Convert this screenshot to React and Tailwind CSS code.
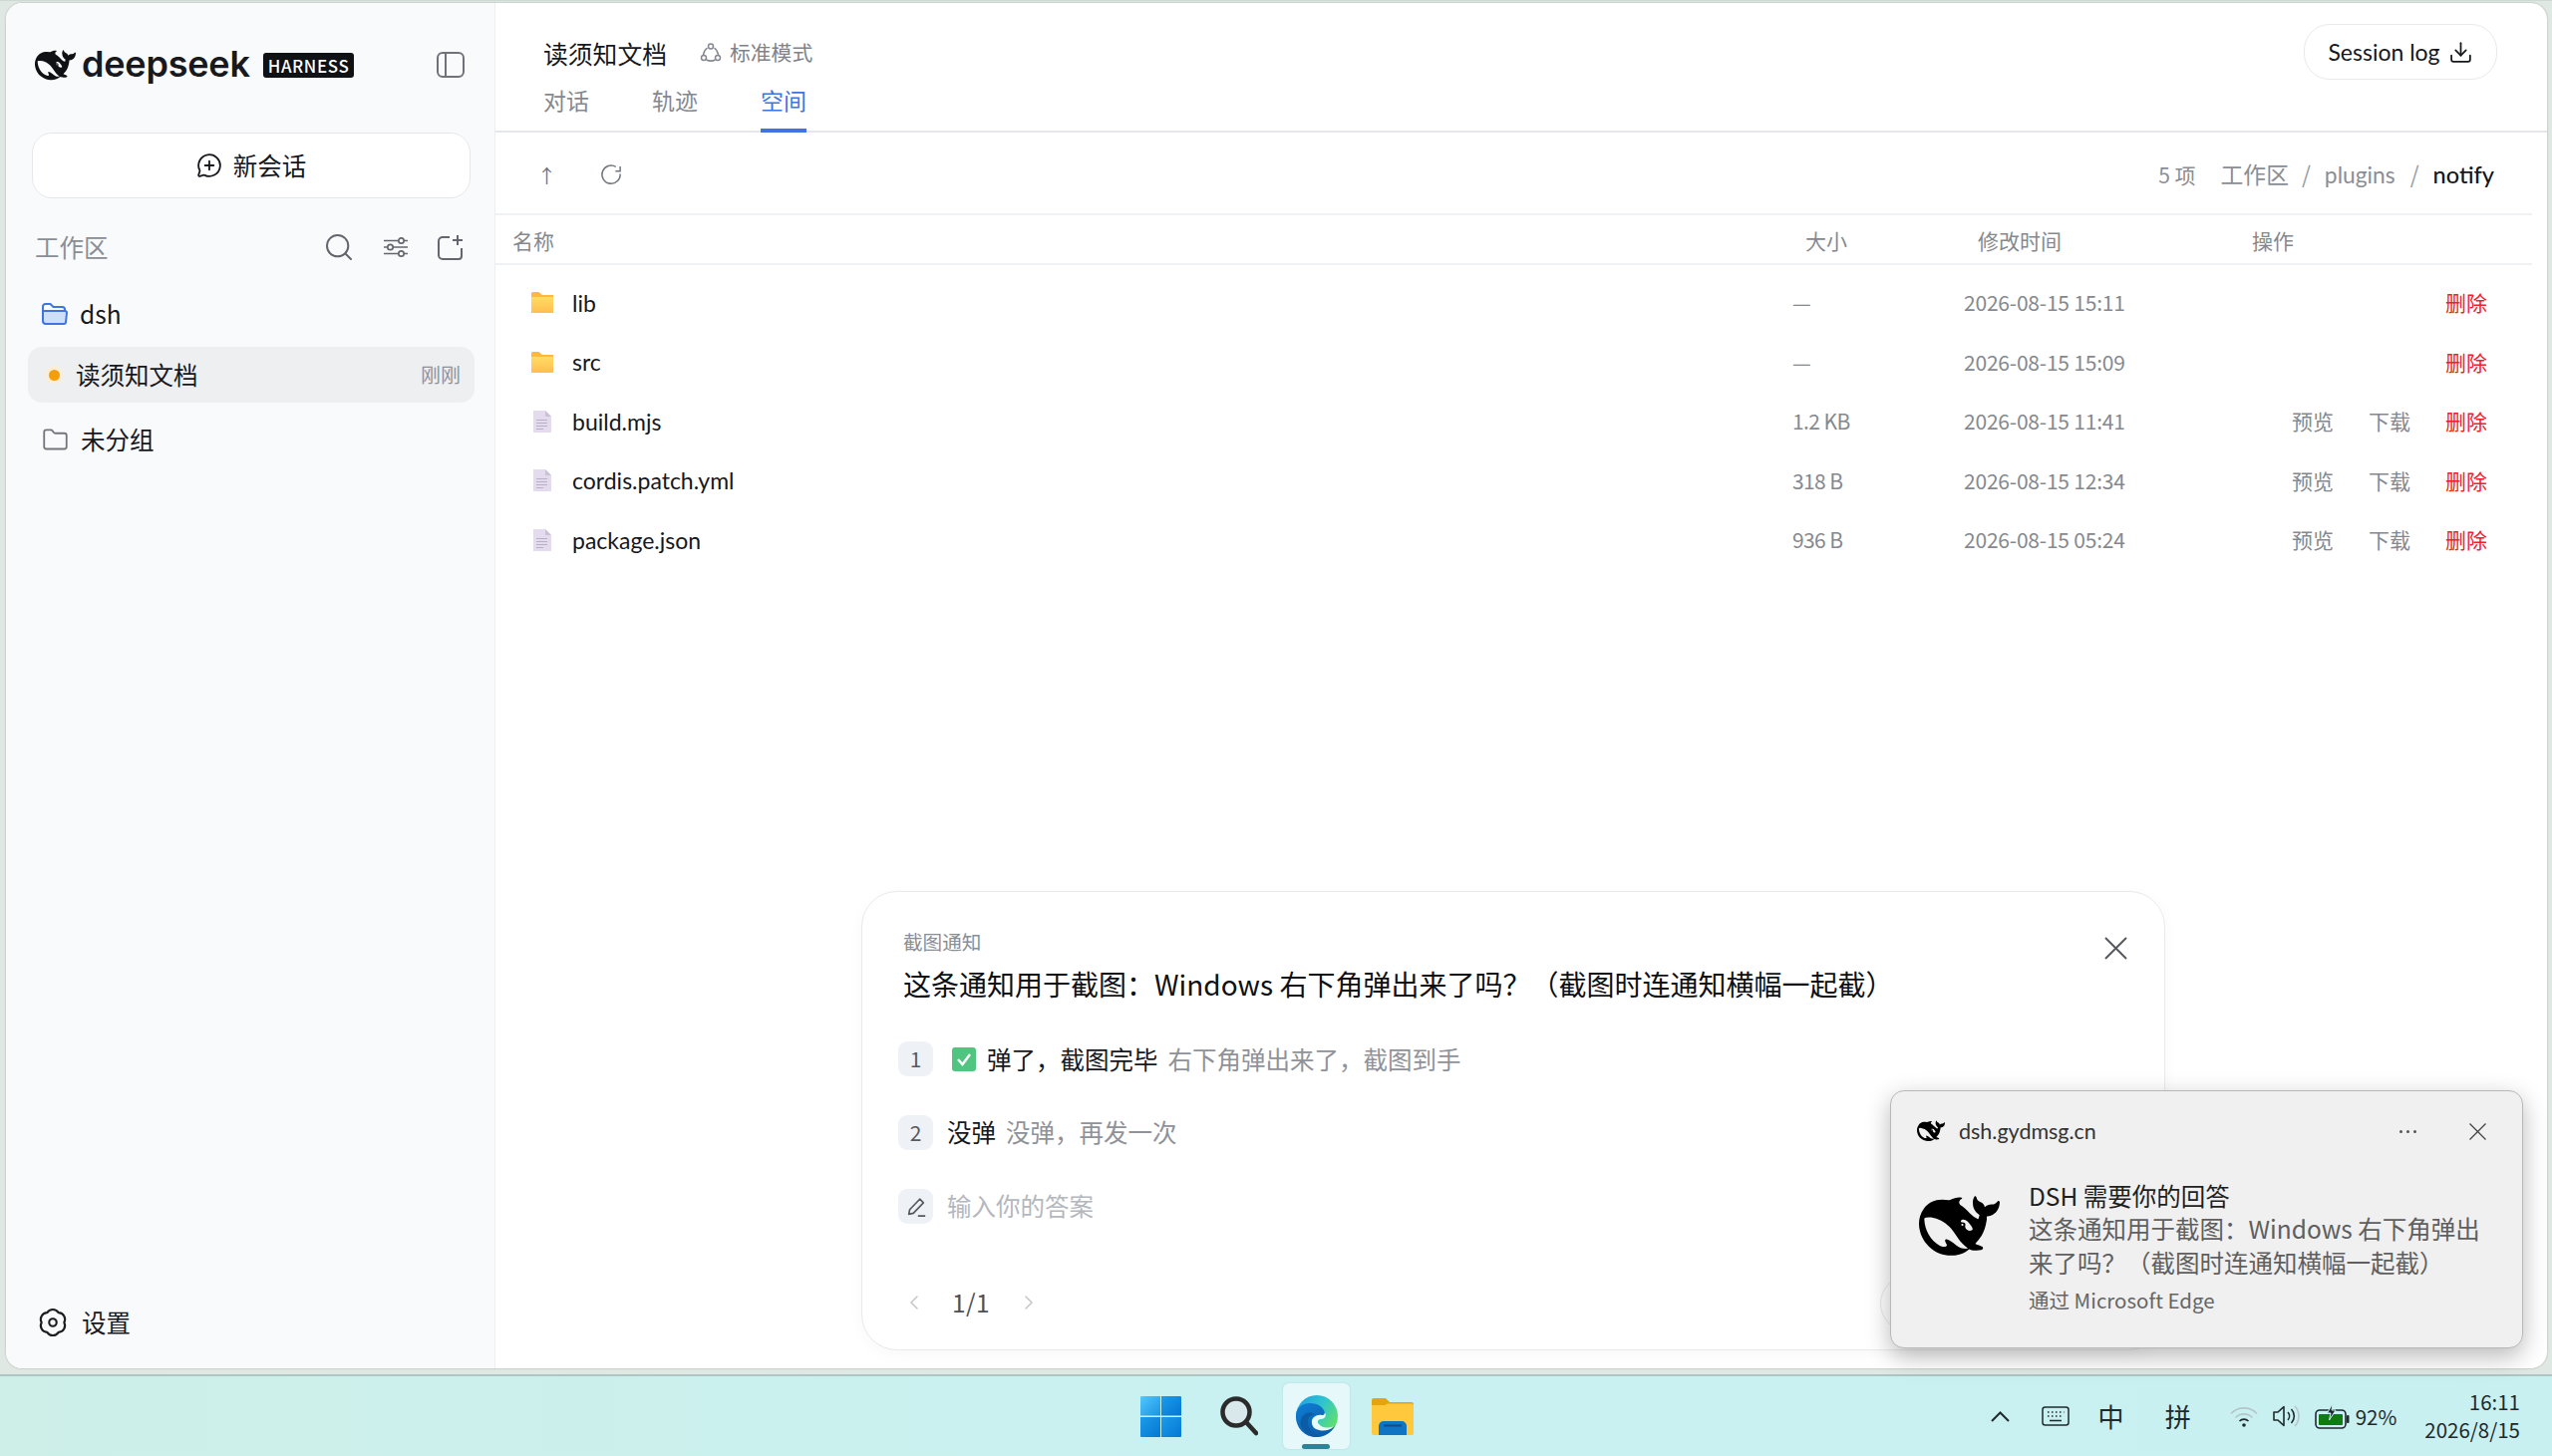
import { Search, MessageCirclePlus, Download, ChevronLeft, ChevronRight, Folder } from 'lucide-react';

const WHALE =
  'M23.748 4.482c-.254-.124-.364.113-.512.234-.051.039-.094.09-.137.136-.372.397-.806.657-1.373.626-.829-.046-1.537.214-2.163.848-.133-.782-.575-1.248-1.247-1.548-.352-.156-.708-.311-.955-.65-.172-.241-.219-.51-.305-.774-.055-.16-.11-.323-.293-.35-.2-.031-.278.136-.356.276-.313.572-.434 1.202-.422 1.84.027 1.436.633 2.58 1.838 3.393.137.093.172.187.129.323-.082.28-.18.552-.266.833-.055.179-.137.217-.329.14a5.526 5.526 0 01-1.736-1.18c-.857-.828-1.631-1.742-2.597-2.458a11.365 11.365 0 00-.689-.471c-.985-.957.13-1.743.388-1.836.27-.098.093-.432-.779-.428-.872.004-1.67.295-2.687.684a3.055 3.055 0 01-.465.137 9.597 9.597 0 00-2.883-.102c-1.885.21-3.39 1.102-4.497 2.623C.082 8.606-.231 10.684.152 12.85c.403 2.284 1.569 4.175 3.36 5.653 1.858 1.533 3.997 2.284 6.438 2.14 1.482-.085 3.133-.284 4.994-1.86.47.234.962.327 1.78.397.63.059 1.236-.03 1.705-.128.735-.156.684-.837.419-.961-2.155-1.004-1.682-.595-2.113-.926 1.096-1.296 2.746-2.642 3.392-7.003.05-.347.007-.565 0-.845-.004-.17.035-.237.23-.256a4.173 4.173 0 001.545-.475c1.396-.763 1.96-2.015 2.093-3.517.02-.23-.004-.467-.247-.588zM11.581 18c-2.089-1.642-3.102-2.183-3.52-2.16-.392.024-.321.471-.235.763.09.288.207.486.371.739.114.167.192.416-.113.603-.673.416-1.842-.14-1.897-.167-1.361-.802-2.5-1.86-3.301-3.307-.774-1.393-1.224-2.887-1.298-4.482-.02-.386.093-.522.477-.592a4.696 4.696 0 011.529-.039c2.132.312 3.946 1.265 5.468 2.774.868.86 1.525 1.887 2.202 2.891.72 1.066 1.494 2.082 2.48 2.914.348.292.625.514.891.677-.802.09-2.14.11-3.054-.614zm1-6.44a.306.306 0 01.415-.287.302.302 0 01.2.288.306.306 0 01-.31.307.303.303 0 01-.304-.308zm3.11 1.596c-.2.081-.399.151-.59.16a1.245 1.245 0 01-.798-.254c-.274-.23-.47-.358-.552-.758a1.73 1.73 0 01.016-.588c.07-.327-.008-.537-.239-.727-.187-.156-.426-.199-.688-.199a.559.559 0 01-.254-.078c-.11-.054-.2-.19-.114-.358.028-.054.16-.186.192-.21.356-.202.767-.136 1.146.016.352.144.618.408 1.001.782.391.451.462.576.685.914.176.265.336.537.445.848.067.195-.019.354-.25.452z';

const FILES = [
  { name: 'lib', dir: true, size: '—', time: '2026-08-15 15:11' },
  { name: 'src', dir: true, size: '—', time: '2026-08-15 15:09' },
  { name: 'build.mjs', size: '1.2 KB', time: '2026-08-15 11:41' },
  { name: 'cordis.patch.yml', size: '318 B', time: '2026-08-15 12:34' },
  { name: 'package.json', size: '936 B', time: '2026-08-15 05:24' },
];

const LATIN = "font-['Lato','Noto_Sans_CJK_SC',sans-serif]";

const Whale = ({ className }) => (
  <svg viewBox="0 0 24 24" className={className} fill="currentColor" fillRule="evenodd">
    <path d={WHALE} />
  </svg>
);

const FolderIcon = () => (
  <svg viewBox="0 0 22 21" className="w-[22px] h-[21px]">
    <defs>
      <linearGradient id="folderBody" x1="0" y1="0" x2="0" y2="1">
        <stop offset="0" stopColor="#ffdc62" />
        <stop offset="1" stopColor="#ffbd51" />
      </linearGradient>
    </defs>
    <path d="M0 1.500A1.500 1.500 0 0 1 1.500 0h6L11 3h11v18H0z" fill="#fdb93f" />
    <rect y="5" width="22" height="16" fill="url(#folderBody)" />
  </svg>
);

const FileIcon = () => (
  <svg viewBox="0 0 18 22" className="w-[18px] h-[22px]">
    <path d="M0 0h12l6 6v16H0z" fill="#e4dcee" />
    <path d="M12 0l6 6h-6z" fill="#c9c2d4" />
    <path d="M3 9.500h11M3 12.500h11M3 15.500h11M3 18.500h7" stroke="#b8b0c4" strokeWidth="1" />
  </svg>
);

const Edge = () => (
  <svg viewBox="0 0 42 42" className="w-[42px] h-[42px]">
    <defs>
      <linearGradient id="edgeTop" x1="0" y1="0" x2="1" y2="0.6">
        <stop offset="0" stopColor="#1b9de2" />
        <stop offset="0.55" stopColor="#2fc4cf" />
        <stop offset="1" stopColor="#5fe06a" />
      </linearGradient>
      <linearGradient id="edgeLow" x1="0" y1="0" x2="0.7" y2="1">
        <stop offset="0" stopColor="#0f7fd6" />
        <stop offset="1" stopColor="#0b5aa8" />
      </linearGradient>
    </defs>
    <circle cx="21" cy="21" r="21" fill="url(#edgeTop)" />
    <path d="M0 21C0 12 7 8 14 8c8 0 14 4 15 10 .3 2-1 3-3 3h-4c-4 0-7 3-6 7 1 4 6 7 12 7 5 0 10-2 12-6-3 7-10 13-20 13C9 42 0 33 0 21z" fill="url(#edgeLow)" />
    <path d="M19 19c-5 1-8 5-7 10 1 5 6 10 13 12-8 2-15-2-19-8-3-5-1-13 5-15 3-1 6 0 8 1z" fill="#0c5ba5" />
    <path d="M16 27c0-5 5-8 10-7 2 .5 3-1 2.600-2.500C31 19 30 24 25 24c-3 0-4 3-2 5 2 3 8 5 15 2-5 6-14 5-18 3-3-1.500-4-4-4-7z" fill="#e8f9fa" />
  </svg>
);

const WinLogo = () => (
  <svg viewBox="0 0 41 41" className="w-[41px] h-[41px]">
    <defs>
      <linearGradient id="winA" x1="0" y1="0" x2="1" y2="1">
        <stop offset="0" stopColor="#52c8fb" />
        <stop offset="1" stopColor="#1b93e5" />
      </linearGradient>
      <linearGradient id="winB" x1="0" y1="0" x2="1" y2="1">
        <stop offset="0" stopColor="#1d9be8" />
        <stop offset="1" stopColor="#0478d4" />
      </linearGradient>
    </defs>
    <path d="M1 0h19v19.500H0V1a1 1 0 0 1 1-1z" fill="url(#winA)" />
    <path d="M21 0h19a1 1 0 0 1 1 1v18.500H21z" fill="url(#winB)" />
    <path d="M0 21h20v20H1a1 1 0 0 1-1-1z" fill="url(#winB)" />
    <path d="M21 21h20v19a1 1 0 0 1-1 1H21z" fill="url(#winB)" />
  </svg>
);

const TaskSearch = () => (
  <svg viewBox="0 0 38 40" className="w-[38px] h-[40px]">
    <circle cx="16" cy="16" r="13.500" fill="#d9e8ea" stroke="#2b2b2b" strokeWidth="4.500" />
    <path d="M26 26l10 11" stroke="#2b2b2b" strokeWidth="4.500" strokeLinecap="round" />
  </svg>
);

const Explorer = () => (
  <svg viewBox="0 0 42 37" className="w-[42px] h-[37px]">
    <path d="M0 2a2 2 0 0 1 2-2h12l4 4h22a2 2 0 0 1 2 2v4H0z" fill="#e5a50a" />
    <path d="M0 7h13l3-1.500h24a2 2 0 0 1 2 2V35a2 2 0 0 1-2 2H2a2 2 0 0 1-2-2z" fill="#ffc83d" />
    <path d="M7 37V28a5 5 0 0 1 5-5h18a5 5 0 0 1 5 5v9z" fill="#0f74c4" />
    <rect x="12" y="26.500" width="18" height="2" fill="#0b4f8f" />
  </svg>
);

const Badge = ({ children }) => (
  <span className="w-[35px] h-[35px] rounded-[9px] bg-[#eef1f6] flex items-center justify-center text-[21px] text-[#555a63] shrink-0">
    {children}
  </span>
);

export default function App() {
  return (
    <div className="relative w-[2560px] h-[1461px] overflow-hidden bg-[#dfe8e2] font-['Noto_Sans_CJK_SC',sans-serif] text-[#16181d]">
      <div className="h-[1379px] pl-[6px] pr-[5px] pt-[2px] pb-[6px] border-t border-[#cdd9d2]">
        <div className="h-full flex rounded-[16px] overflow-hidden bg-white shadow-[0_0_2px_rgba(0,0,0,0.3)]">
          {/* sidebar */}
          <aside className="w-[491px] shrink-0 bg-[#f9fafc] border-r border-[#edeef0] flex flex-col">
            <div className="h-[130px] pl-[29px] pr-[30px] flex items-center pb-[6px]">
              <Whale className="w-[41px] h-[41px] text-[#0f1115]" />
              <span className="ml-[6px] font-['Inter',sans-serif] font-semibold text-[36px] tracking-[-0.200px] leading-none text-[#17191e] pb-[2px]">deepseek</span>
              <span className="ml-[13px] h-[25px] px-[5px] rounded-[3px] bg-[#0f1115] text-white text-[17px] font-medium tracking-[0.600px] leading-none flex items-center">HARNESS</span>
              <svg viewBox="0 0 28 26" className="ml-auto w-[28px] h-[26px]" fill="none" stroke="#6f7379" strokeWidth="2">
                <rect x="1" y="1" width="26" height="24" rx="5" />
                <path d="M9 1v24" />
              </svg>
            </div>
            <div className="ml-[26px] mr-[24px] h-[66px] rounded-[20px] border border-[#e6e7ea] bg-white flex items-center justify-center gap-[11px] text-[24.500px]">
              <MessageCirclePlus size={26} strokeWidth={1.700} />
              新会话
            </div>
            <div className="mt-[21px] pl-[29px] pr-[30px] h-[56px] flex items-center">
              <span className="text-[24.500px] text-[#8a8e95]">工作区</span>
              <Search className="ml-auto text-[#63676d]" size={32} strokeWidth={1.500} />
              <svg viewBox="0 0 24 24" className="ml-[29px] w-[24px] h-[24px]" fill="none" stroke="#63676d" strokeWidth="1.700">
                <path d="M0 5.500h14M21 5.500h3M0 12h3M10 12h14M0 18.500h14M21 18.500h3" />
                <circle cx="17.500" cy="5.500" r="2.700" />
                <circle cx="6.500" cy="12" r="2.700" />
                <circle cx="17.500" cy="18.500" r="2.700" />
              </svg>
              <svg viewBox="0 0 28 26" className="ml-[29px] w-[28px] h-[26px]" fill="none" stroke="#63676d" strokeWidth="2">
                <path d="M13 3H6a4 4 0 0 0-4 4v14a4 4 0 0 0 4 4h16a3 3 0 0 0 3-3v-8M21 1v10M16 6h10" />
              </svg>
            </div>
            <div className="mt-[14px] pl-[36px] h-[50px] flex items-center gap-[12px] text-[24.500px]">
              <svg viewBox="0 0 26 22" className="w-[26px] h-[22px]" fill="#cfdffb" stroke="#3f74e3" strokeWidth="2" strokeLinejoin="round">
                <path d="M1 18V3.500A2.500 2.500 0 0 1 3.500 1h5l3 3h9A2.500 2.500 0 0 1 23 6.500V8" fill="none" />
                <path d="M1 8h22a2 2 0 0 1 2 2l-1 9a2 2 0 0 1-2 2H4a3 3 0 0 1-3-3z" />
              </svg>
              dsh
            </div>
            <div className="ml-[22px] mr-[20px] mt-[8px] h-[56px] rounded-[14px] bg-[#eeeff1] flex items-center pl-[17px] pr-[14px]">
              <span className="w-[18px] h-[18px] rounded-full bg-[#fbeed8] flex items-center justify-center">
                <span className="w-[11px] h-[11px] rounded-full bg-[#f59e0b]" />
              </span>
              <span className="ml-[13px] text-[24.500px]">读须知文档</span>
              <span className="ml-auto text-[20px] text-[#8f9298]">刚刚</span>
            </div>
            <div className="mt-[12px] pl-[36px] h-[50px] flex items-center gap-[12px] text-[24.500px]">
              <Folder className="text-[#72767c]" size={27} strokeWidth={1.600} />
              未分组
            </div>
            <div className="mt-auto mb-[26px] pl-[31px] h-[40px] flex items-center gap-[13px] text-[24.500px]">
              <svg viewBox="0 0 24 24" className="w-[32px] h-[32px]" fill="none" stroke="#1b1d21" strokeWidth="1.600" strokeLinejoin="round">
                <path d="M7.750 4.640A5 5 0 0 1 16.250 4.640A5 5 0 0 1 20.500 12A5 5 0 0 1 16.250 19.360A5 5 0 0 1 7.750 19.360A5 5 0 0 1 3.500 12A5 5 0 0 1 7.750 4.640Z" />
                <circle cx="12" cy="12" r="2.800" />
              </svg>
              设置
            </div>
          </aside>

          {/* main */}
          <main className="flex-1 min-w-0 flex flex-col">
            <header className="h-[130px] shrink-0 border-b-2 border-[#e5e7eb] flex justify-between pl-[48px] pr-[50px]">
              <div className="flex flex-col">
                <div className="pt-[33px] h-[67px] flex items-start">
                  <span className="text-[24.800px] leading-[34px]">读须知文档</span>
                  <span className="ml-[33px] flex items-center gap-[8px] h-[34px] text-[20.800px] text-[#7f8389]">
                    <svg viewBox="0 0 22 22" className="w-[22px] h-[22px]" fill="none" stroke="#85898f" strokeWidth="1.500">
                      <circle cx="11" cy="4.500" r="2.500" />
                      <circle cx="4" cy="16" r="2.500" />
                      <circle cx="18" cy="16" r="2.500" />
                      <path d="M7.500 6c-2 1.500-3.500 3.500-4 7M14.500 6c2 1.500 3.500 3.500 4 7M6.500 18c3 1.500 6 1.500 9 0" />
                    </svg>
                    标准模式
                  </span>
                </div>
                <nav className="flex gap-[63px] text-[23px] text-[#85898f]">
                  <span className="h-[63px] pt-[15px] leading-[30px]">对话</span>
                  <span className="h-[63px] pt-[15px] leading-[30px]">轨迹</span>
                  <span className="h-[63px] pt-[15px] leading-[30px] text-[#3f74e3] border-b-[4px] border-[#3f74e3]">空间</span>
                </nav>
              </div>
              <div className={`mt-[21px] h-[56px] w-[194px] rounded-[26px] border border-[#e8e9eb] flex items-center justify-center gap-[8px] text-[23px] ${LATIN}`}>
                Session log
                <Download size={25} strokeWidth={1.700} />
              </div>
            </header>

            <div className="flex-1 min-h-0 mr-[15px] flex flex-col">
              <div className="h-[83px] shrink-0 border-b-2 border-[#f0f1f2] flex items-center pt-[4px] pl-[42px] pr-[38px] text-[#8a8e95]">
                <span className="text-[19px] text-[#6f7379] leading-none">↑</span>
                <svg viewBox="0 0 24 24" className="ml-[44px] w-[23px] h-[23px]" fill="none" stroke="#74787e" strokeWidth="1.600">
                  <path d="M16.500 3.500A9.500 9.500 0 1 0 21 11" />
                  <path d="M21 3v5h-5" />
                </svg>
                <span className="ml-auto text-[21px]">5 项</span>
                <span className="ml-[25px] text-[22.800px]">工作区</span>
                <span className="ml-[13px] text-[22.800px] text-[#9a9da3]">/</span>
                <span className={`ml-[14px] text-[22.800px] ${LATIN}`}>plugins</span>
                <span className="ml-[15px] text-[22.800px] text-[#9a9da3]">/</span>
                <span className={`ml-[14px] text-[23.500px] font-medium text-[#16181d] ${LATIN}`}>notify</span>
              </div>
              <div className="h-[50px] shrink-0 border-b-2 border-[#f0f1f2] pt-[3px] pl-[17px] grid grid-cols-[1285px_171px_289px_1fr] items-center text-[21px] text-[#85898f]">
                <span>名称</span>
                <span className="pl-[12px]">大小</span>
                <span className="pl-[14px]">修改时间</span>
                <span>操作</span>
              </div>
              <div className="pt-[8px] flex-1 min-h-0">
                {FILES.map((file) => (
                  <div key={file.name} className="h-[59.500px] pl-[17px] grid grid-cols-[1285px_171px_289px_1fr] items-center text-[21px] text-[#85898f]">
                    <span className={`pl-[19px] flex items-center gap-[19px] text-[23px] text-[#16181d] ${LATIN}`}>
                      <span className="w-[22px] flex justify-center">{file.dir ? <FolderIcon /> : <FileIcon />}</span>
                      {file.name}
                    </span>
                    <span className="-ml-[1px] tracking-[-0.600px]">{file.size}</span>
                    <span className="tracking-[-0.200px]">{file.time}</span>
                    <span className="flex justify-end gap-[35px] pr-[45px]">
                      {!file.dir && <span>预览</span>}
                      {!file.dir && <span>下载</span>}
                      <span className="text-[#f0202a]">删除</span>
                    </span>
                  </div>
                ))}
              </div>
              <div className="flex justify-center pb-[18px] pr-[1px] shrink-0">
                <section className="relative w-[1308px] h-[461px] rounded-[36px] border border-[#e9eaec] bg-white pl-[41px] pt-[37px] shadow-[0_4px_16px_rgba(0,0,0,0.03)]">
                  <p className="text-[19.600px] leading-[26px] text-[#8a8e95]">截图通知</p>
                  <h2 className="mt-[10px] text-[28px] leading-[38px] text-[#0e1013]">这条通知用于截图：Windows 右下角弹出来了吗？（截图时连通知横幅一起截）</h2>
                  <svg viewBox="0 0 23 23" className="absolute right-[37px] top-[45px] w-[23px] h-[23px]" stroke="#55595f" strokeWidth="2">
                    <path d="M1 1l21 21M22 1L1 22" />
                  </svg>
                  <div className="mt-[39px] -ml-[5px] flex flex-col gap-[39px] text-[24.500px]">
                    <div className="flex items-center gap-[14px] h-[35px]">
                      <div className="flex items-center">
                        <Badge>1</Badge>
                        <svg viewBox="0 0 24 24" className="ml-[19px] w-[24px] h-[24px]">
                          <rect width="24" height="24" rx="3" fill="#4fc57f" />
                          <path d="M6 12l4.500 5L18 7" fill="none" stroke="#fff" strokeWidth="2.500" />
                        </svg>
                      </div>
                      <span className="-ml-[3px] pt-[2px]">弹了，截图完毕</span>
                      <span className="-ml-[4px] pt-[2px] text-[#8f9298]">右下角弹出来了，截图到手</span>
                    </div>
                    <div className="flex items-center gap-[14px] h-[35px]">
                      <Badge>2</Badge>
                      <span>没弹</span>
                      <span className="-ml-[4px] text-[#8f9298]">没弹，再发一次</span>
                    </div>
                    <div className="flex items-center gap-[14px] h-[35px]">
                      <Badge>
                        <svg viewBox="0 0 24 24" className="w-[22px] h-[22px]" fill="none" stroke="#55595f" strokeWidth="1.800" strokeLinejoin="round">
                          <path d="M4 20l1-5L16 3.500l4 4L9 19zM14 22h8" />
                        </svg>
                      </Badge>
                      <span className="text-[#b4b7bd]">输入你的答案</span>
                    </div>
                  </div>
                  <div className="mt-[64px] flex items-center h-[30px] text-[24.500px] text-[#4d5158]">
                    <ChevronLeft className="-ml-[1px] text-[#c4c6ca]" size={24} strokeWidth={1.500} />
                    <span className="ml-[26px] tracking-[0.400px]">1/1</span>
                    <ChevronRight className="ml-[27px] text-[#c4c6ca]" size={24} strokeWidth={1.500} />
                  </div>
                  <span className="absolute left-[1021px] top-[385px] w-[56px] h-[56px] rounded-full border border-[#e6e7e9]" />
                </section>
              </div>
            </div>
          </main>
        </div>
      </div>

      {/* taskbar */}
      <footer className="h-[82px] border-t-2 border-[#adc6c3] bg-gradient-to-r from-[#cdefe8] via-[#c9f1f1] to-[#c9f0f1] flex items-center pl-[1144px] pr-[32px]">
        <WinLogo />
        <span className="ml-[39px]"><TaskSearch /></span>
        <span className="relative ml-[25px] w-[67px] h-[66px] rounded-[6px] bg-[#e6f8f9] shadow-[0_0_2px_rgba(0,0,0,0.12)] flex items-center justify-center">
          <Edge />
          <span className="absolute bottom-0 left-[19px] w-[28px] h-[5px] rounded-full bg-[#2a8597]" />
        </span>
        <span className="ml-[22px]"><Explorer /></span>

        <div className="ml-auto flex items-center text-[#1e2a2c]">
          <svg viewBox="0 0 19 11" className="w-[19px] h-[11px]" fill="none" stroke="#1e2a2c" strokeWidth="2">
            <path d="M1 10l8.500-8.500L18 10" />
          </svg>
          <svg viewBox="0 0 28 20" className="ml-[32px] w-[28px] h-[20px]" fill="none" stroke="#1e2a2c" strokeWidth="1.500">
            <rect x="1" y="1" width="26" height="18" rx="2.500" />
            <path d="M6 6h1.500M10 6h1.500M14 6h1.500M18 6h1.500M22 6h.5M6 10h1.500M10 10h1.500M14 10h1.500M18 10h1.500M8 14.500h12" />
          </svg>
          <span className="ml-[29px] text-[26px] leading-none">中</span>
          <span className="ml-[41px] text-[26px] leading-none">拼</span>
          <svg viewBox="0 0 28 22" className="ml-[39px] w-[28px] h-[22px]" fill="none" strokeWidth="1.700">
            <path d="M1 8.500a18 18 0 0 1 26 0" stroke="#b5c6c8" />
            <path d="M5.500 12.500a12 12 0 0 1 17 0" stroke="#b5c6c8" />
            <path d="M9.500 16a6.500 6.500 0 0 1 9 0" stroke="#1e2a2c" />
            <circle cx="14" cy="20" r="1.800" fill="#1e2a2c" />
          </svg>
          <svg viewBox="0 0 27 24" className="ml-[15px] w-[27px] h-[24px]" fill="none" strokeWidth="1.600">
            <path d="M1 8h4l6-5.500v19L5 16H1z" stroke="#1e2a2c" strokeLinejoin="round" />
            <path d="M15 8a6 6 0 0 1 0 8M18.500 5a10 10 0 0 1 0 14" stroke="#1e2a2c" />
            <path d="M22 2a14.500 14.500 0 0 1 0 20" stroke="#b5c6c8" />
          </svg>
          <svg viewBox="0 0 35 26" className="ml-[15px] w-[35px] h-[26px]">
            <rect x="1" y="7" width="30" height="18" rx="4" fill="#cbeef0" stroke="#1e2a2c" strokeWidth="1.600" />
            <rect x="4" y="11" width="24" height="11" rx="1" fill="#107c10" />
            <rect x="32" y="12" width="2.500" height="8" rx="1" fill="#1e2a2c" />
            <path d="M18 0l-5.500 10h3.500l-1.500 7 6.500-10h-4z" fill="#1e2a2c" stroke="#cbeef0" strokeWidth="1" />
          </svg>
          <span className="ml-[6px] text-[20.500px]">92%</span>
          <div className="ml-[28px] -mt-[3px] flex flex-col items-end text-[20.500px] leading-[28px]">
            <span>16:11</span>
            <span>2026/8/15</span>
          </div>
        </div>
      </footer>

      {/* windows toast */}
      <div className="absolute left-[1896px] top-[1094px] w-[635px] h-[259px] rounded-[14px] border border-[#b8b8b8] bg-[#f0f0f0] shadow-[0_8px_24px_rgba(0,0,0,0.28)]">
        <div className="pl-[26px] pr-[36px] h-[80px] flex items-center">
          <Whale className="w-[28px] h-[28px] text-black" />
          <span className={`ml-[14px] text-[21.500px] text-[#333] ${LATIN}`}>dsh.gydmsg.cn</span>
          <span className="ml-auto flex gap-[4px]">
            <span className="w-[3px] h-[3px] rounded-full bg-[#555]" />
            <span className="w-[3px] h-[3px] rounded-full bg-[#555]" />
            <span className="w-[3px] h-[3px] rounded-full bg-[#555]" />
          </span>
          <svg viewBox="0 0 17 17" className="ml-[53px] w-[17px] h-[17px]" stroke="#444" strokeWidth="1.300">
            <path d="M0.500 0.500l16 16M16.500 0.500l-16 16" />
          </svg>
        </div>
        <div className="flex pl-[28px]">
          <Whale className="mt-[15px] w-[81px] h-[81px] text-black shrink-0" />
          <div className="ml-[29px] pt-[8px] w-[470px]">
            <p className="text-[24.500px] leading-[33px] text-[#1f1f1f]">DSH 需要你的回答</p>
            <p className="text-[24.500px] leading-[33.500px] text-[#5f5f5f]">这条通知用于截图：Windows 右下角弹出来了吗？（截图时连通知横幅一起截）</p>
            <p className="mt-[7px] text-[20.500px] leading-[28px] text-[#666]">通过 Microsoft Edge</p>
          </div>
        </div>
      </div>
    </div>
  );
}
